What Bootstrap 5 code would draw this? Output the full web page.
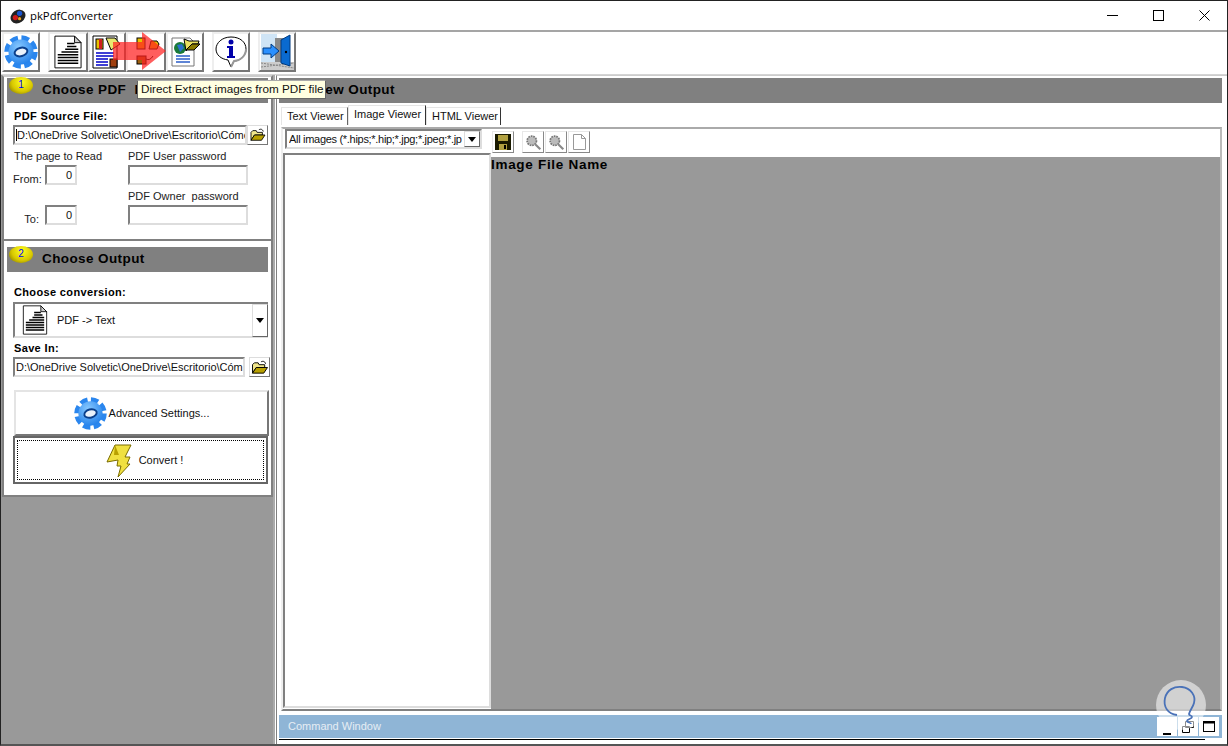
<!DOCTYPE html>
<html lang="en"><head><meta charset="utf-8"><title>pkPdfConverter</title>
<link href="https://cdn.jsdelivr.net/npm/bootstrap@5.3.0/dist/css/bootstrap.min.css" rel="stylesheet">
<style>
html,body{margin:0;height:746px;overflow:hidden;background:#fff}
body{font-family:"Liberation Sans",Arial,sans-serif;font-size:11px;color:#111;line-height:1.2}
svg{display:block;flex:none}
.win{position:relative;width:1228px;height:746px;border:1px solid #222;border-bottom:2px solid #555;overflow:hidden}
.ttl{height:29px;padding-left:8px;border-bottom:2px solid #a5a5a5;box-sizing:content-box;color:#000}
.ttl .nm{margin-left:3px;font-family:"Open Sans","Liberation Sans",sans-serif;font-size:11.3px}
.wbtn{width:46px;height:29px}
.tbar{height:42px;padding-left:1px;border-bottom:1px solid #d5d5d5;box-sizing:content-box}
.tb{width:38px;height:40px;background:#fff;border:2px solid;border-color:#eee #777 #777 #eee}
.tbw{width:40px}
.gapl{margin-left:8px}
.main{min-height:0}
.lp{width:274px;background:#999;padding-left:1px;border-right:2px solid #aaa}
.pnl{width:271px;background:#fff;border:2px solid #808080;border-top-color:#ccc;padding:1px 3px 0 3px}
.p1{height:166px}
.p2{height:256px;border-top:0;padding-top:6px}
.hbar{height:25px;background:#808080;font-weight:700;font-size:13.5px;letter-spacing:.4px;color:#000;padding-left:35px;padding-top:4px;position:relative;white-space:nowrap}
.coin{position:absolute;left:2px;top:-1px;width:24px;height:17px;border-radius:50%;background:radial-gradient(ellipse at 55% 30%,#ffff20,#d8c800 55%,#6f6600 100%);color:#00f;font-size:10px;line-height:15px;text-align:center;font-weight:400;letter-spacing:0}
.blbl{font-weight:700;font-size:11px;letter-spacing:.35px;color:#000;padding-left:1px}
.fld{height:20px;background:#fff;border:2px solid;border-color:#808080 #ddd #ddd #808080;padding:2px 2px 0 1px;white-space:nowrap;overflow:hidden;font-size:11px}
.cur{border-left:1px solid #000}
.form{padding-left:6px}
.formgrid{display:grid;grid-template-columns:115px 120px;grid-template-rows:20px 20px 20px 20px}
.fbtn{width:21px;height:20px;background:#fff;border:1px solid;border-color:#ddd #777 #777 #ddd}
.num{width:32px;height:20px;text-align:right;padding-right:3px;margin-left:6px}
.frm{color:#222;padding-left:1px;padding-top:5px}
.flab{width:26px;text-align:right;margin-bottom:-1px;color:#222}
.combo{height:36px;background:#fff;border:2px solid;border-right:0;border-color:#808080 #ddd #ddd #808080;padding-left:7px}
.cbtn{width:16px;height:33px;border:1px solid;border-color:#ddd #666 #666 #ddd;background:#fff}
.abtn{width:255px;height:46px;background:#fff;border:2px solid;border-color:#e4e4e4 #777 #777 #e4e4e4;margin-left:1px;padding-top:1px}
.cvt{width:255px;height:48px;background:#fff;border:2px solid #666;padding:2px}
.dots{border:1px dotted #000}
.rp{border-left:1px solid #808080;background:#fff;padding:2px 5px 0 2px;margin-left:1px;border-top:1px solid #ccc}
.rbar{height:25px;background:#808080;font-weight:700;font-size:13.5px;letter-spacing:.4px;padding:4px 0 0 33px;color:#000}
.tabs{height:22px;padding-left:2px;margin-bottom:2px}
.tabi{height:18px;padding:2px 0 0 5px;border:1px solid;border-color:#e5e5e5 #666 #fff #e5e5e5;background:#fff;border-bottom:0;white-space:nowrap}
.tabi.act{height:20px}
.box{height:584px;border:2px solid;border-color:#aaa #bbb #808080 #eee;margin-left:2px;width:941px}
.lc{width:208px}
.cmb{height:20px;width:197px;margin-left:2px;border:2px solid;border-color:#808080 #ddd #ddd #808080;padding:2px 0 0 2px;white-space:nowrap;overflow:hidden}
.cmb b{font-weight:400;flex:1;overflow:hidden;letter-spacing:-.3px}
.cmbb{width:16px;height:16px;border:1px solid;border-color:#ddd #666 #666 #ddd;margin-top:-2px}
.lst{height:555px;margin-top:4px;border:2px solid;border-color:#808080 #ddd #ddd #808080;width:208px;background:#fff}
.vw{flex:1;min-width:0}
.vtb{height:28px;padding:2px 0 0 1px}
.ib{width:22px;height:22px;border:1px solid;border-color:#e8e8e8 #888 #888 #e8e8e8;margin-right:1px}
.view{background:#999;height:552px;font-weight:700;font-size:13.5px;letter-spacing:.7px;color:#000;line-height:1;padding-top:1px}
.cmdw{height:23px;background:#8fb5d6;margin-top:4px;padding-left:9px;color:#e6edf4;width:943px}
.mb{width:20px;height:19px;background:#fff;margin-right:1px}
.blk{height:1px;background:#000;width:926px;margin-top:1px}
.arrow{position:absolute;left:112px;top:31px}
.tip{position:absolute;left:136px;top:79px;height:19px;width:189px;background:#ffffe1;border:1px solid #666;border-top-color:#aaa;font-size:11.7px;padding:1px 0 0 3px;white-space:nowrap;color:#111}
.wm{position:absolute;left:1154px;top:678px}
</style></head><body>
<svg width="0" height="0" style="position:absolute">
<defs>
<radialGradient id="gblue" cx=".4" cy=".3" r=".8"><stop offset="0" stop-color="#86c8ff"/><stop offset="1" stop-color="#1a7ae8"/></radialGradient>
<symbol id="gear" viewBox="0 0 34 34"><circle cx="17" cy="17" r="14" fill="none" stroke="#2a86ee" stroke-width="5.500" stroke-dasharray="7.500 3.500"/><circle cx="17" cy="17" r="12.500" fill="url(#gblue)"/><ellipse cx="17" cy="17" rx="6.500" ry="4.200" transform="rotate(-15 17 17)" fill="#eaf2fb" stroke="#0a3f8c" stroke-width="2"/></symbol>
<symbol id="doc" viewBox="0 0 30 36"><path d="M1 1h21l7 7v27H1z" fill="#fff" stroke="#000"/><path d="M22 1v7h7z" fill="#ccc" stroke="#000"/><path d="M14 9h8M14 12h10M12 15h14M8 18h18M4 21h22M4 24h22M4 27h22M4 30h22" stroke="#000" stroke-width="1.600"/></symbol>
<symbol id="folder" viewBox="0 0 18 16"><path d="M1 5l2-2h4l1 2h6v3H5L1 14z" fill="#f0e68c" stroke="#000"/><path d="M1 14l4-6h12l-4 6z" fill="#b8a000" stroke="#000"/><path d="M10 2c2-1 4-1 5 2" fill="none" stroke="#000"/></symbol>
<symbol id="zoomi" viewBox="0 0 20 20"><circle cx="8" cy="8" r="5.500" fill="#bbb" stroke="#777" stroke-width="2" stroke-dasharray="2 1"/><path d="M12 12l6 6" stroke="#888" stroke-width="2.500"/></symbol>
</defs></svg>
<div class="win d-flex flex-column">
 <div class="ttl d-flex align-items-center">
  <svg width="18" height="18" viewBox="0 0 17 17"><ellipse cx="8.500" cy="9" rx="7.500" ry="6" transform="rotate(-35 8.500 9)" fill="#222"/><circle cx="6" cy="10" r="2.500" fill="#d01a1a"/><circle cx="10" cy="6" r="2.500" fill="#1a55d0"/><circle cx="10" cy="11" r="1.500" fill="#e8a020"/></svg>
  <span class="nm">pkPdfConverter</span>
  <div class="ms-auto d-flex">
   <div class="wbtn d-flex align-items-center justify-content-center"><svg width="11" height="11"><path d="M0 5.500h11" stroke="#000"/></svg></div>
   <div class="wbtn d-flex align-items-center justify-content-center"><svg width="11" height="11"><rect x=".5" y=".5" width="10" height="10" fill="none" stroke="#000"/></svg></div>
   <div class="wbtn d-flex align-items-center justify-content-center"><svg width="11" height="11"><path d="M.5.500l10 10M10.500.500l-10 10" stroke="#000"/></svg></div>
  </div>
 </div>
 <div class="tbar d-flex align-items-start">
  <div class="tb d-flex align-items-center justify-content-center"><svg width="34" height="34"><use href="#gear"/></svg></div>
  <div class="tb tbw gapl d-flex align-items-center justify-content-center"><svg width="28" height="34"><use href="#doc"/></svg></div>
  <div class="tb d-flex align-items-center justify-content-center"><svg width="30" height="34" viewBox="0 0 30 34"><path d="M1 1h24v32H1z" fill="#fff" stroke="#000"/><rect x="4" y="4" width="7" height="10" fill="#e8c000" stroke="#000"/><rect x="7" y="4" width="3" height="10" fill="#d02020"/><path d="M14 3l9 0 5 6-9 6z" fill="#e8e870" stroke="#000"/><path d="M4 18h18M4 21h18M4 24h12M4 27h12M4 30h12" stroke="#0000c8" stroke-width="1.500"/><rect x="18" y="24" width="7" height="8" fill="#a04010" stroke="#000"/></svg></div>
  <div class="tb tbw d-flex align-items-center justify-content-center"><svg width="30" height="34" viewBox="0 0 30 34"><rect x="6" y="3" width="8" height="11" fill="#e8c000" stroke="#000"/><rect x="6" y="21" width="9" height="8" fill="#a06010" stroke="#000"/><path d="M15 24q4 2 7-3" fill="none" stroke="#000"/><path d="M20 6h6l2 3-2 5H18z" fill="#e8c000" stroke="#000"/></svg></div>
  <div class="tb d-flex align-items-center justify-content-center"><svg width="32" height="34" viewBox="0 0 32 34"><path d="M3 3h18l4 4v24H3z" fill="#fff" stroke="#777"/><path d="M7 21h14M7 24h14M7 27h14" stroke="#2a5cc8" stroke-width="1.500"/><circle cx="11" cy="13" r="6" fill="#1a7a3a"/><path d="M8 10l5-1 2 4-4 4z" fill="#2a70d0"/><path d="M15 4l5 2 10 0-1 3-6 0-6 7z" fill="#e8e060" stroke="#000"/><path d="M17 15l6-6h8l-6 6z" fill="#8a7a00" stroke="#000"/></svg></div>
  <div class="tb gapl d-flex align-items-center justify-content-center"><svg width="34" height="34" viewBox="0 0 34 34"><path d="M17 2c9 0 15 5 15 12s-6 12-12 12l-3 6-3-7C7 24 2 20 2 14S8 2 17 2z" fill="#fff" stroke="#000"/><path d="M32 14c0 7-6 12-12 12l-3 6" fill="none" stroke="#999" stroke-width="2"/><circle cx="17" cy="7" r="2.500" fill="#00a"/><path d="M13 11h6v10h2v2h-8v-2h2v-8h-2z" fill="#00a"/></svg></div>
  <div class="tb gapl d-flex align-items-center justify-content-center"><svg width="33" height="36" viewBox="0 0 33 36"><rect width="33" height="28" fill="#fff"/><rect width="16" height="28" fill="#cfe4f5"/><path d="M0 28h33v8H0z" fill="#ccc"/><path d="M0 29l33 5M0 33l33-4" stroke="#888" stroke-dasharray="2 1"/><rect x="14" y="4" width="14" height="24" fill="#888"/><path d="M20 6l9-5v31l-9-3z" fill="#0a6ad0" stroke="#003a80"/><circle cx="25" cy="18" r="1.200" fill="#000"/><path d="M2 14h8v-4l8 7-8 7v-4H2z" fill="#2a90ff" stroke="#003a80"/></svg></div>
 </div>
 <div class="main d-flex flex-fill">
  <div class="lp">
   <div class="pnl p1">
    <div class="hbar"><span class="coin">1</span>Choose PDF&nbsp; Input</div>
    <div class="form">
     <div class="blbl" style="margin-top:7px;height:13px">PDF Source File:</div>
     <div class="d-flex" style="margin-top:2px;width:255px">
      <div class="fld" style="width:234px"><span class="cur">D:\OneDrive Solvetic\OneDrive\Escritorio\Cómo</span></div>
      <div class="fbtn d-flex align-items-center justify-content-center"><svg width="16" height="14"><use href="#folder"/></svg></div>
     </div>
     <div class="formgrid">
      <div class="frm">The page to Read</div><div class="frm ps-0">PDF User password</div>
      <div class="d-flex align-items-end"><span class="flab">From:</span><div class="fld num">0</div></div><div class="fld"></div>
      <div></div><div class="frm ps-0">PDF Owner&nbsp; password</div>
      <div class="d-flex align-items-end"><span class="flab">To:</span><div class="fld num">0</div></div><div class="fld"></div>
     </div>
    </div>
   </div>
   <div class="pnl p2">
    <div class="hbar"><span class="coin">2</span>Choose Output</div>
    <div class="form">
     <div class="blbl" style="margin-top:14px;height:14px">Choose conversion:</div>
     <div class="combo d-flex align-items-center" style="margin-top:2px;width:255px">
      <svg width="26" height="30"><use href="#doc"/></svg><span style="margin-left:9px;padding-top:2px" class="flex-fill">PDF -&gt; Text</span>
      <div class="cbtn d-flex align-items-center justify-content-center"><svg width="8" height="5"><path d="M0 0h8L4 5z" fill="#000"/></svg></div>
     </div>
     <div class="blbl" style="margin-top:4px;height:14px">Save In:</div>
     <div class="d-flex" style="margin-top:1px;width:257px">
      <div class="fld" style="width:232px">D:\OneDrive Solvetic\OneDrive\Escritorio\Cóm</div>
      <div class="fbtn ms-auto d-flex align-items-center justify-content-center"><svg width="18" height="15"><use href="#folder"/></svg></div>
     </div>
     <div class="abtn d-flex align-items-center justify-content-center" style="margin-top:13px"><svg width="33" height="33"><use href="#gear"/></svg><span style="margin-left:2px">Advanced Settings...</span></div>
     <div class="cvt"><div class="dots h-100 d-flex align-items-center justify-content-center ps-2" style="padding-top:2px"><svg width="26" height="34" viewBox="0 0 26 34"><path d="M9 1h16l-6 12 5 0-3 7 3 0-12 13 3-11-4 0 1-6-11 2z" fill="#f0e040" stroke="#7a6c00"/><path d="M9 1l-1 10 5 0" fill="#b8a000"/></svg><span style="margin-left:7px">Convert !</span></div></div>
    </div>
   </div>
  </div>
  <div class="rp flex-fill d-flex flex-column">
   <div class="rbar">View Output</div>
   <div class="tabs d-flex align-items-end">
    <div class="tabi" style="width:67px">Text Viewer</div>
    <div class="tabi act" style="width:78px;border-right-color:#333">Image Viewer</div>
    <div class="tabi" style="width:75px;border-right-color:#333">HTML Viewer</div>
   </div>
   <div class="box d-flex">
    <div class="lc">
     <div class="cmb d-flex"><b>All images (*.hips;*.hip;*.jpg;*.jpeg;*.jp</b><div class="cmbb d-flex align-items-center justify-content-center"><svg width="8" height="5"><path d="M0 0h8L4 5z" fill="#000"/></svg></div></div>
     <div class="lst"></div>
    </div>
    <div class="vw d-flex flex-column">
     <div class="vtb d-flex">
      <div class="ib d-flex align-items-center justify-content-center"><svg width="16" height="16" viewBox="0 0 16 16"><path d="M0 0h16v16H0z" fill="#1a1a00"/><rect x="3" y="1" width="10" height="6" fill="#b0a040"/><rect x="4" y="10" width="8" height="6" fill="#b0a040"/><rect x="9" y="11" width="2" height="4" fill="#000"/></svg></div>
      <div class="ib d-flex align-items-center justify-content-center" style="margin-left:7px"><svg width="17" height="17"><use href="#zoomi"/></svg></div>
      <div class="ib d-flex align-items-center justify-content-center"><svg width="17" height="17"><use href="#zoomi"/></svg></div>
      <div class="ib d-flex align-items-center justify-content-center"><svg width="13" height="16" viewBox="0 0 13 16"><path d="M.5.500h8l4 4v11H.5z" fill="#fff" stroke="#999"/><path d="M8.500.500v4h4" fill="none" stroke="#999"/></svg></div>
     </div>
     <div class="view">Image File Name</div>
    </div>
   </div>
   <div class="cmdw d-flex align-items-center">Command Window
    <div class="ms-auto d-flex" style="margin-right:2px">
     <div class="mb d-flex align-items-end justify-content-center"><svg width="8" height="6"><rect y="3" width="8" height="2" fill="#000"/></svg></div>
     <div class="mb d-flex align-items-center justify-content-center"><svg width="12" height="12"><path d="M3.500.500h8v6h-8zM.500 5.500h7v6h-7z" fill="#fff" stroke="#000"/></svg></div>
     <div class="mb d-flex align-items-center justify-content-center"><svg width="12" height="11"><rect x=".5" y=".5" width="11" height="10" fill="none" stroke="#000"/><path d="M0 1.500h12" stroke="#000" stroke-width="2"/></svg></div>
    </div>
   </div>
   <div class="blk"></div>
  </div>
 </div>
 <svg class="arrow" width="54" height="38" viewBox="0 0 54 38"><path d="M0 10h29V0l24 19-24 19V28H0z" fill="#ff2020" fill-opacity=".72"/></svg>
 <div class="tip">Direct Extract images from PDF file</div>
 <svg class="wm" width="52" height="52" viewBox="0 0 52 52"><circle cx="26" cy="26" r="25" fill="#fff" fill-opacity=".55"/><path d="M22 36c-9-1-14-8-12-17 2-8 9-12 17-11 9 1 14 9 12 16-1 4-4 7-5 11 0 2 3 1 3 3s-5 2-5 4 4 1 4 3" fill="none" stroke="#4a72b8" stroke-width="1.800"/></svg>
</div>
<script src="https://cdn.jsdelivr.net/npm/bootstrap@5.3.0/dist/js/bootstrap.bundle.min.js"></script>
</body></html>
